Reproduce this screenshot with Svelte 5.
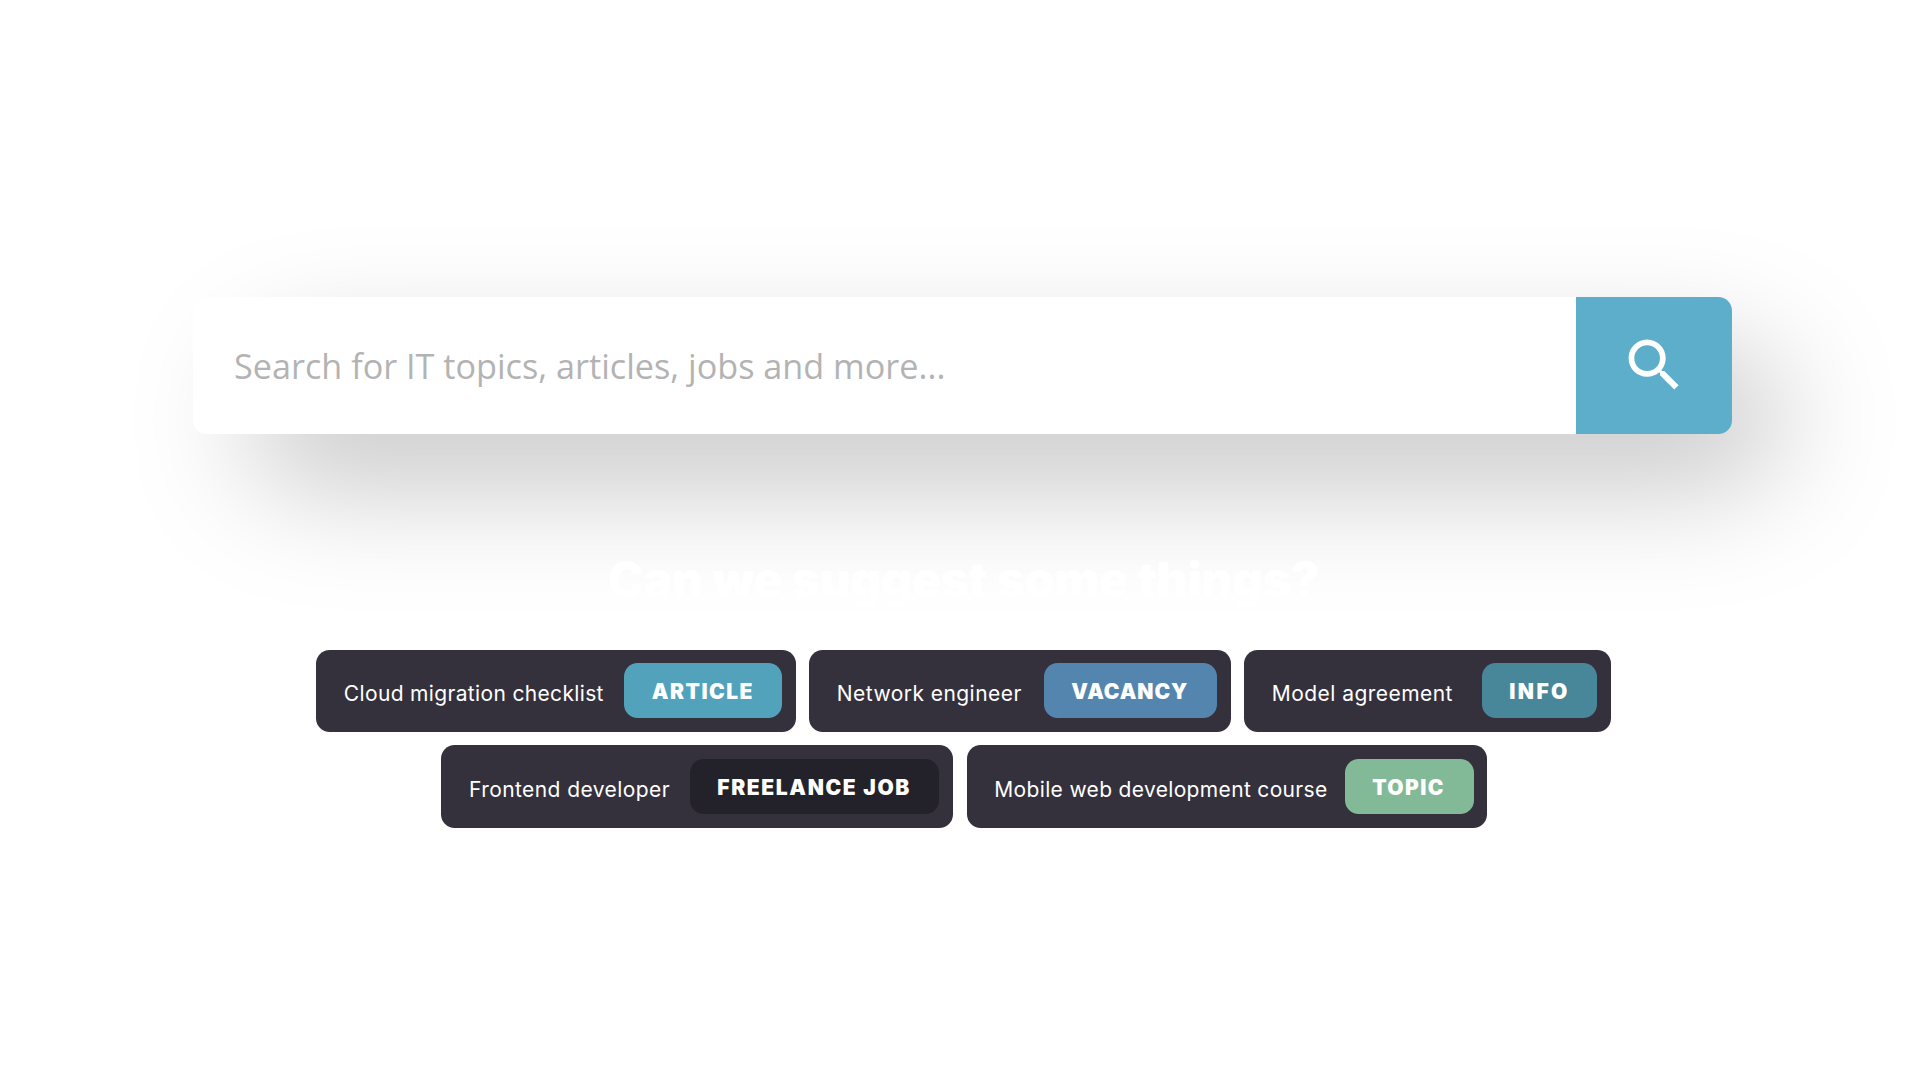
<script>
  const rows = [
    [
      { label: 'Cloud migration checklist', tag: 'ARTICLE', kind: 'article' },
      { label: 'Network engineer', tag: 'VACANCY', kind: 'vacancy' },
      { label: 'Model agreement', tag: 'INFO', kind: 'info' }
    ],
    [
      { label: 'Frontend developer', tag: 'FREELANCE JOB', kind: 'freelance' },
      { label: 'Mobile web development course', tag: 'TOPIC', kind: 'topic' }
    ]
  ];
</script>

<main>
  <form class="search">
    <input type="text" placeholder="Search for IT topics, articles, jobs and more..." aria-label="Search" />
    <button type="button" aria-label="Search">
      <svg viewBox="0 0 24 24" aria-hidden="true">
        <path
          d="M15.5 14h-.79l-.28-.27C15.41 12.59 16 11.11 16 9.5 16 5.91 13.09 3 9.5 3S3 5.91 3 9.5 5.91 16 9.5 16c1.61 0 3.09-.59 4.23-1.57l.27.28v.79l5 4.99L20.49 19l-4.99-5zm-6 0C7.01 14 5 11.99 5 9.5S7.01 5 9.5 5 14 7.01 14 9.5 11.99 14 9.5 14z"
        />
      </svg>
    </button>
  </form>

  <h2>Can we suggest some things?</h2>

  <div class="suggestions">
    {#each rows as row}
      <div class="row">
        {#each row as item}
          <div class="chip {item.kind}">
            <span class="label">{item.label}</span>
            <span class="tag">{item.tag}</span>
          </div>
        {/each}
      </div>
    {/each}
  </div>
</main>

<style>
  :global(body) {
    background: #fff;
    overflow: hidden;
  }

  main {
    box-sizing: border-box;
    width: 1920px;
    height: 1080px;
    padding: 297px 188px 0 192.5px;
    font-family: Inter, 'Liberation Sans', sans-serif;
  }

  .search {
    position: relative;
    isolation: isolate;
    display: flex;
    height: 137px;
  }

  /* Soft shadow cast down and to the right, rounder than the bar itself */
  .search::before {
    content: '';
    position: absolute;
    z-index: -1;
    inset: 0;
    border-radius: 68px;
    background: rgba(0, 0, 0, 0.215);
    transform: translate(52px, 53px);
    filter: blur(59px);
  }

  input {
    flex: 1;
    min-width: 0;
    box-sizing: border-box;
    padding: 0 0 0 41.5px;
    border: 0;
    border-radius: 13.7px 0 0 13.7px;
    outline: 0;
    background: #fff;
    font: 34.2px 'Open Sans', 'Noto Sans', sans-serif;
  }

  input::placeholder {
    color: #b3b3b3;
    opacity: 1;
  }

  button {
    display: flex;
    align-items: center;
    justify-content: center;
    width: 156px;
    padding: 0 0 0 1.5px;
    border: 0;
    border-radius: 0 13.7px 13.7px 0;
    background: #5daecb;
  }

  svg {
    width: 68.6px;
    height: 68.6px;
    fill: #fff;
  }

  h2 {
    position: relative;
    margin: 111.5px 0 36px;
    padding-left: 3px;
    color: #fff;
    font-size: 48px;
    font-weight: 900;
    line-height: 68px;
    letter-spacing: -0.3px;
    text-align: center;
  }

  .suggestions {
    position: relative;
    display: flex;
    flex-direction: column;
    gap: 13.7px;
  }

  .row {
    display: flex;
    justify-content: center;
    gap: 13.6px;
    padding-left: 2.2px;
  }

  .row:last-child {
    padding-left: 4px;
  }

  .chip {
    display: flex;
    align-items: center;
    justify-content: space-between;
    box-sizing: border-box;
    height: 82.3px;
    padding: 0 13.7px 0 27.7px;
    border-radius: 13.7px;
    background: #35313c;
    color: #fff;
    font-size: 21px;
    white-space: nowrap;
  }

  .label {
    padding-top: 5px;
  }

  .tag {
    box-sizing: border-box;
    height: 55px;
    padding: 2px 0 0 27.5px;
    border-radius: 13.7px;
    font-weight: 900;
    line-height: 53px;
  }

  .article { width: 479.4px; }
  .article .label { letter-spacing: 0.34px; }
  .article .tag { width: 157.6px; background: #52a2bb; letter-spacing: 1.5px; }

  .vacancy { width: 421.4px; }
  .vacancy .label { letter-spacing: 0.45px; }
  .vacancy .tag { width: 173px; background: #5485ae; letter-spacing: 0.95px; }

  .info { width: 366.4px; }
  .info .label { letter-spacing: 0.45px; }
  .info .tag { width: 115px; background: #488799; letter-spacing: 2.4px; }

  .freelance { width: 511.7px; }
  .freelance .label { letter-spacing: 0.42px; }
  .freelance .tag { width: 249.6px; background: #23222b; letter-spacing: 1.65px; }

  .topic { width: 520.6px; }
  .topic .label { letter-spacing: 0.34px; }
  .topic .tag { width: 128.8px; background: #82b997; letter-spacing: 1.4px; }
</style>
